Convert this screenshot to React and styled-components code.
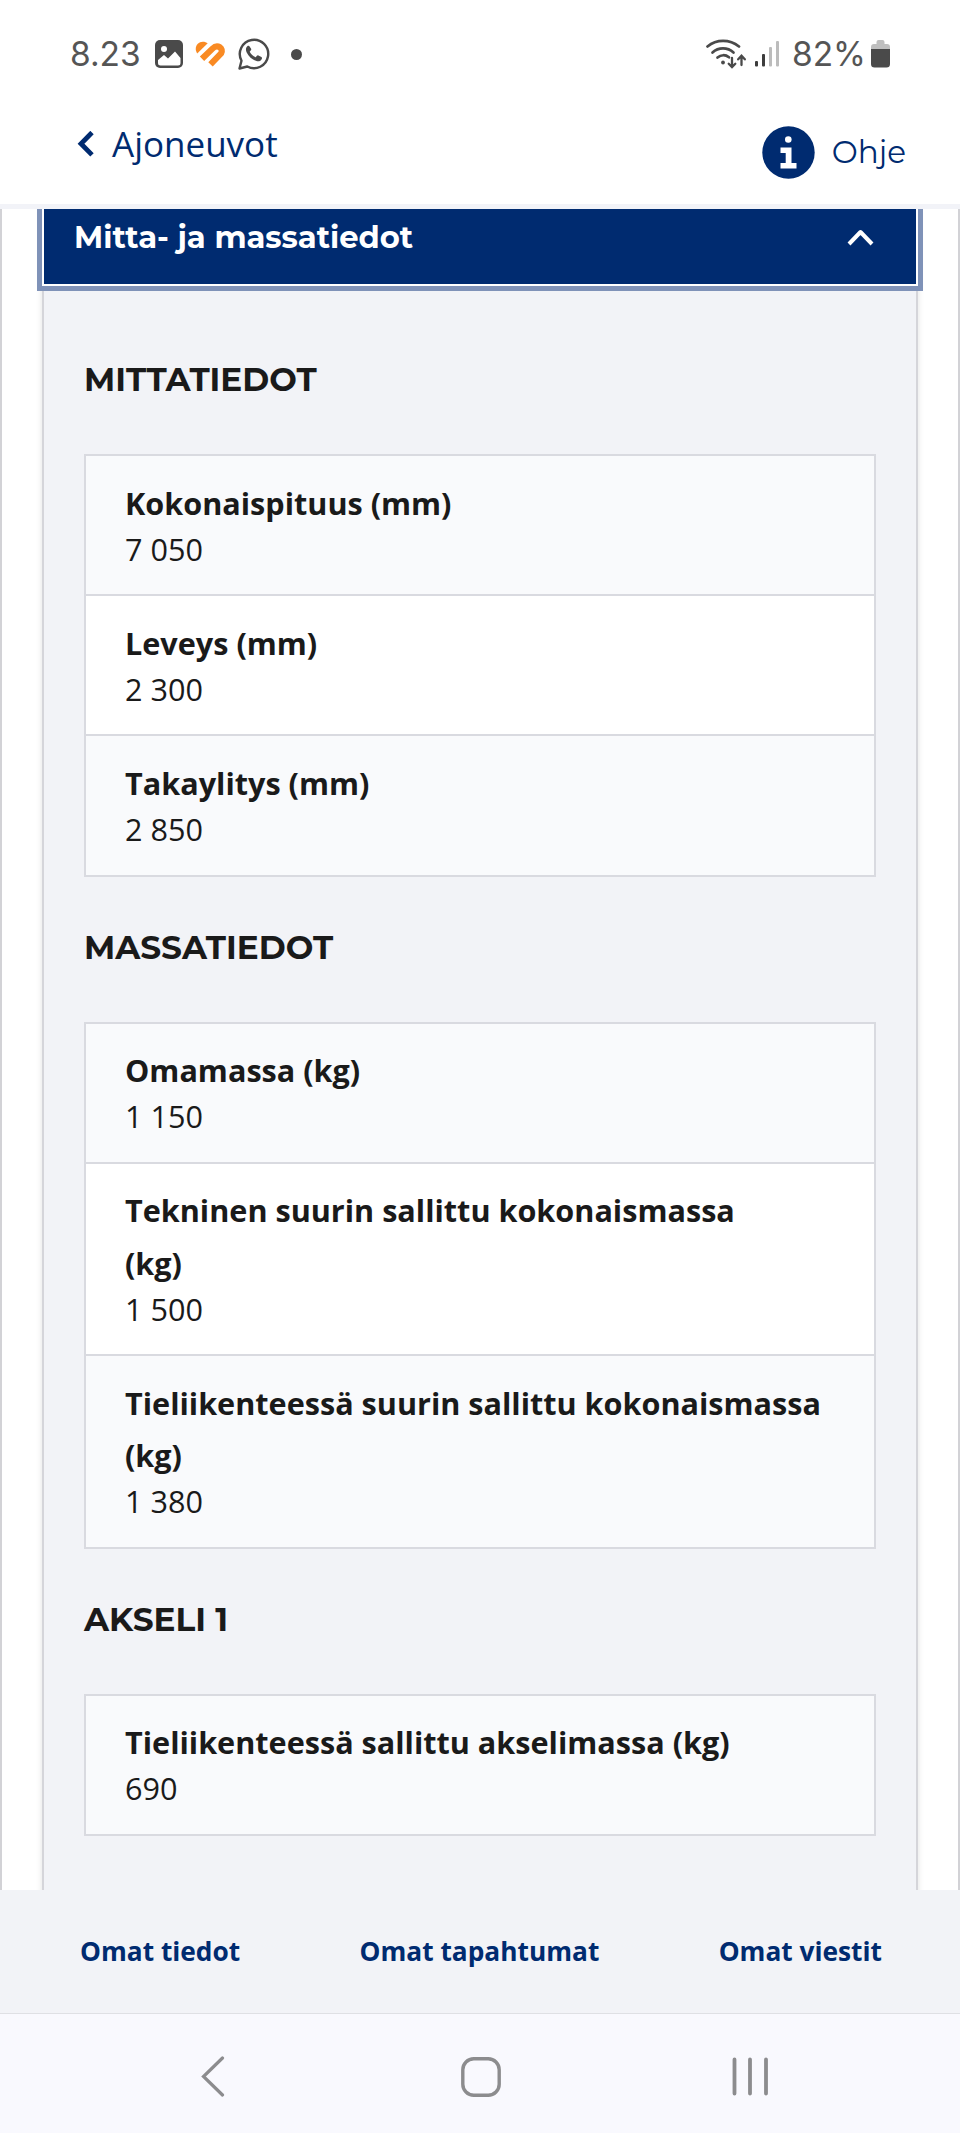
import React, { useState } from "react";
import styled, { createGlobalStyle } from "styled-components";

const sections = [
  {
    id: "mitat",
    title: "MITTATIEDOT",
    rows: [
      { label: "Kokonaispituus (mm)", value: "7 050" },
      { label: "Leveys (mm)", value: "2 300" },
      { label: "Takaylitys (mm)", value: "2 850" },
    ],
  },
  {
    id: "massat",
    title: "MASSATIEDOT",
    rows: [
      { label: "Omamassa (kg)", value: "1 150" },
      { label: "Tekninen suurin sallittu kokonaismassa\n(kg)", value: "1 500" },
      {
        label: "Tieliikenteessä suurin sallittu kokonaismassa\n(kg)",
        value: "1 380",
      },
    ],
  },
  {
    id: "akseli1",
    title: "AKSELI 1",
    rows: [{ label: "Tieliikenteessä sallittu akselimassa (kg)", value: "690" }],
  },
];

const links = ["Omat tiedot", "Omat tapahtumat", "Omat viestit"];

const ImageIcon = () => (
  <svg width="28" height="28" viewBox="0 0 28 28">
    <rect width="28" height="28" rx="5" fill="#4a4a4a" />
    <circle cx="9" cy="9" r="3" fill="#fff" />
    <path
      d="M3 20l6-5 4 3.500 7-7 5.500 6.500v5a2.500 2.500 0 0 1-2.500 2.500H5.500A2.500 2.500 0 0 1 3 23z"
      fill="#fff"
    />
  </svg>
);

const HeartIcon = () => (
  <svg width="31" height="27" viewBox="0 0 31 27" fill="none">
    <path d="M2.200 12.500C-1.500 6.500 2.500.8 7.800.8c2 0 3.700.6 4.900 1.500z" fill="#f98a23" />
    <path
      d="M7 17.800L17.500 7.600c5-4.800 11.500-.4 8.600 4.800L15.500 23.300"
      stroke="#f98a23"
      strokeWidth="6.200"
      strokeLinejoin="round"
    />
  </svg>
);

const WhatsappIcon = () => (
  <svg width="32" height="32" viewBox="0 0 32 32" fill="none">
    <path
      d="M1.500 30.500l2-7.800A14.200 14.200 0 1 1 9.300 28.500z"
      stroke="#4a4a4a"
      strokeWidth="2.400"
      strokeLinejoin="round"
    />
    <path
      d="M11.600 8.500c-.5-.9-1.600-.8-2.300-.2-1.700 1.700-1.700 4-.6 6.300 2 4.100 5.600 7.300 9.800 8.500 2.200.6 4.800-.3 5.400-2.400.2-.8.1-1.500-.5-1.800l-3-1.500c-.6-.3-1.100-.1-1.500.4l-1.200 1.500c-2.700-1-4.700-3-6-5.500l1.200-1.500c.4-.5.4-.9.200-1.500z"
      fill="#4a4a4a"
    />
  </svg>
);

const WifiIcon = () => (
  <svg width="40" height="30" viewBox="0 0 40 30" fill="none" stroke="#4a4a4a" strokeLinecap="round">
    <path d="M1.500 7.500c9-7.500 22-7.500 31.500 0" strokeWidth="2.700" />
    <path d="M6.500 13.500c6-5.500 15-5.500 21 0" strokeWidth="2.700" />
    <path d="M11.500 18.500c3.500-3 8-3 11.500-.2" strokeWidth="2.700" />
    <circle cx="17" cy="23.500" r="1.900" fill="#4a4a4a" stroke="none" />
    <path d="M26 19v9m-3.300-3.300l3.300 3.300 3.300-3.300" strokeWidth="2.300" />
    <path d="M35.500 26v-9m-3.300 3.300l3.300-3.500 3.300 3.500" strokeWidth="2.300" />
  </svg>
);

const SignalIcon = () => (
  <svg width="25" height="26" viewBox="0 0 25 26">
    <rect x="0" y="20" width="3" height="5.500" rx="1" fill="#3d3d3d" />
    <rect x="7" y="13" width="3" height="12.500" rx="1" fill="#3d3d3d" />
    <rect x="14" y="6" width="3" height="19.500" rx="1" fill="#bcbcbc" />
    <rect x="21" y="0" width="3" height="25.500" rx="1" fill="#bcbcbc" />
  </svg>
);

const BatteryIcon = () => (
  <svg width="19" height="28" viewBox="0 0 19 28">
    <path d="M0 10V7q0-3 3-3h2.500V2q0-2 2-2h4q2 0 2 2v2H16q3 0 3 3v3z" fill="#bfbfbf" />
    <path d="M0 9h19v15q0 3.500-3.500 3.500h-12Q0 27.500 0 24z" fill="#4a4a4a" />
  </svg>
);

const InfoIcon = () => (
  <svg width="53" height="53" viewBox="0 0 53 53">
    <circle cx="26.500" cy="26.500" r="26.200" fill="#002b70" />
    <circle cx="26.300" cy="13.500" r="3.300" fill="#fff" />
    <path d="M18.500 21.500h11v15.500h5v5.500h-16v-5.500h5.200V27h-5.200z" fill="#fff" />
  </svg>
);

const Page = () => {
  const [open, setOpen] = useState(true);

  return (
    <Screen>
      <GlobalStyle />
      <StatusBar>
        <StatusText>8.23</StatusText>
        <StatusIcons>
          <ImageIcon />
          <HeartIcon />
          <WhatsappIcon />
          <Dot />
        </StatusIcons>
        <StatusRight>
          <WifiIcon />
          <SignalIcon />
          <StatusText $wide>82%</StatusText>
          <BatteryIcon />
        </StatusRight>
      </StatusBar>

      <Header>
        <BackLink type="button">
          <svg width="17" height="26" viewBox="0 0 17 26" fill="none">
            <path d="M15 1.500L4 12.700l11 11.200" stroke="#002b70" strokeWidth="4.800" />
          </svg>
          Ajoneuvot
        </BackLink>
        <HelpLink type="button">
          <InfoIcon />
          Ohje
        </HelpLink>
      </Header>

      <Content>
        <Panel>
          <AccordionHead type="button" onClick={() => setOpen(!open)}>
            Mitta- ja massatiedot
            <svg width="27" height="17" viewBox="0 0 27 17" fill="none">
              <path
                d="M2 15L13.500 3 25 15"
                stroke="#fff"
                strokeWidth="4"
                strokeLinejoin="round"
              />
            </svg>
          </AccordionHead>
          {open && (
            <AccordionBody>
              {sections.map((section) => (
                <section key={section.id}>
                  <Heading>{section.title}</Heading>
                  <Table>
                    {section.rows.map((row) => (
                      <Row key={row.label}>
                        <dt>{row.label}</dt>
                        <dd>{row.value}</dd>
                      </Row>
                    ))}
                  </Table>
                </section>
              ))}
            </AccordionBody>
          )}
        </Panel>
      </Content>

      <Footer>
        {links.map((link) => (
          <FooterLink key={link} type="button">
            {link}
          </FooterLink>
        ))}
      </Footer>

      <SystemNav>
        <svg width="29" height="41" viewBox="0 0 29 41" fill="none">
          <path d="M21.500 2L2.500 20.500l19 18.500" stroke="#8c8c8e" strokeWidth="3.200" strokeLinecap="round" />
        </svg>
        <svg width="40" height="40" viewBox="0 0 40 40" fill="none">
          <rect x="1.800" y="1.800" width="36.400" height="36.400" rx="11" stroke="#8c8c8e" strokeWidth="3.400" />
        </svg>
        <svg width="36" height="39" viewBox="0 0 36 39" fill="none">
          <path d="M2.500 2.500v34M18 2.500v34M34 2.500v34" stroke="#8c8c8e" strokeWidth="3.800" strokeLinecap="round" />
        </svg>
      </SystemNav>
    </Screen>
  );
};

const GlobalStyle = createGlobalStyle`
  * {
    box-sizing: border-box;
    margin: 0;
    padding: 0;
  }

  body {
    background: #fff;
    color: #1a1a1a;
    font-family: "Open Sans", sans-serif;
  }

  button {
    border: 0;
    background: none;
    font: inherit;
    cursor: pointer;
  }

  svg {
    display: block;
    flex-shrink: 0;
  }
`;

const Screen = styled.div`
  display: flex;
  flex-direction: column;
  width: 960px;
  height: 2133px;
  overflow: hidden;
`;

const StatusBar = styled.div`
  display: flex;
  align-items: center;
  height: 108px;
  padding: 0 70px;
`;

const StatusText = styled.span`
  font-family: Inter, sans-serif;
  font-size: 33.500px;
  font-weight: 400;
  line-height: 40px;
  color: #555;
  margin-left: ${({ $wide }) => ($wide ? "12px" : "0")};
  margin-right: ${({ $wide }) => ($wide ? "5px" : "0")};
`;

const StatusIcons = styled.div`
  display: flex;
  align-items: center;
  gap: 12px;
  margin-left: 14px;
`;

const Dot = styled.span`
  width: 11px;
  height: 11px;
  margin-left: 9px;
  border-radius: 50%;
  background: #4a4a4a;
`;

const StatusRight = styled.div`
  display: flex;
  align-items: center;
  margin-left: auto;

  svg + svg {
    margin-left: 9px;
  }
`;

const Header = styled.header`
  display: flex;
  align-items: flex-start;
  justify-content: space-between;
  height: 101px;
  padding: 0 54px 0 77px;
  border-bottom: 5px solid #f2f3f8;
`;

const BackLink = styled.button`
  display: flex;
  align-items: center;
  gap: 18px;
  height: 72px;
  color: #002b70;
  font-size: 35px;
  line-height: 46px;
`;

const HelpLink = styled.button`
  display: flex;
  align-items: center;
  gap: 17px;
  height: 88px;
  color: #002b70;
  font-family: Montserrat, Inter, sans-serif;
  font-size: 31px;
`;

const Content = styled.main`
  height: 1681px;
  padding: 0 40px;
  overflow: hidden;
  border: solid #d2d2d6;
  border-width: 0 2px;
`;

const Panel = styled.div`
  height: 1700px;
  border: solid #d5d5da;
  border-width: 0 2px;
  background: #f2f3f7;
  box-shadow: 0 0 6px rgba(0, 0, 0, 0.12);
`;

const AccordionHead = styled.button`
  display: flex;
  position: relative;
  justify-content: space-between;
  align-items: flex-start;
  width: 100%;
  height: 75px;
  padding: 8px 42px 0 30px;
  background: #002b70;
  box-shadow: 0 0 0 2px #fff, 0 0 0 7px #7f92b8;
  color: #fff;
  font-family: Montserrat, Inter, sans-serif;
  font-size: 30.600px;
  font-weight: 700;
  line-height: 40px;

  svg {
    margin-top: 12px;
  }
`;

const AccordionBody = styled.div`
  padding: 25px 40px 0;
`;

const Heading = styled.h2`
  height: 145px;
  font-family: Montserrat, Inter, sans-serif;
  font-size: 32.700px;
  font-weight: 700;
  line-height: 140px;
`;

const Table = styled.dl`
  border: solid #d9dae0;
  border-width: 2px 2px 0;
`;

const Row = styled.div`
  padding: 20.500px 38px 24px 39px;
  border-bottom: 2px solid #d9dae0;
  background: #f9fafc;

  &:nth-child(even) {
    background: #fff;
  }

  dt {
    font-size: 30.600px;
    font-weight: 700;
    line-height: 52.200px;
    white-space: pre-line;
  }

  dd {
    font-size: 30.600px;
    line-height: 41.500px;
  }
`;

const Footer = styled.nav`
  display: flex;
  justify-content: space-between;
  align-items: center;
  height: 124px;
  padding: 0 78px 1px 80px;
  border-bottom: 1px solid #dfe0e4;
  background: #f2f3f7;
`;

const FooterLink = styled.button`
  color: #002b70;
  font-size: 26.300px;
  font-weight: 700;
`;

const SystemNav = styled.div`
  display: flex;
  flex: 1;
  justify-content: space-between;
  align-items: center;
  padding: 6px 192px 0 201px;
  background: #f9f9fe;
`;

export default Page;
